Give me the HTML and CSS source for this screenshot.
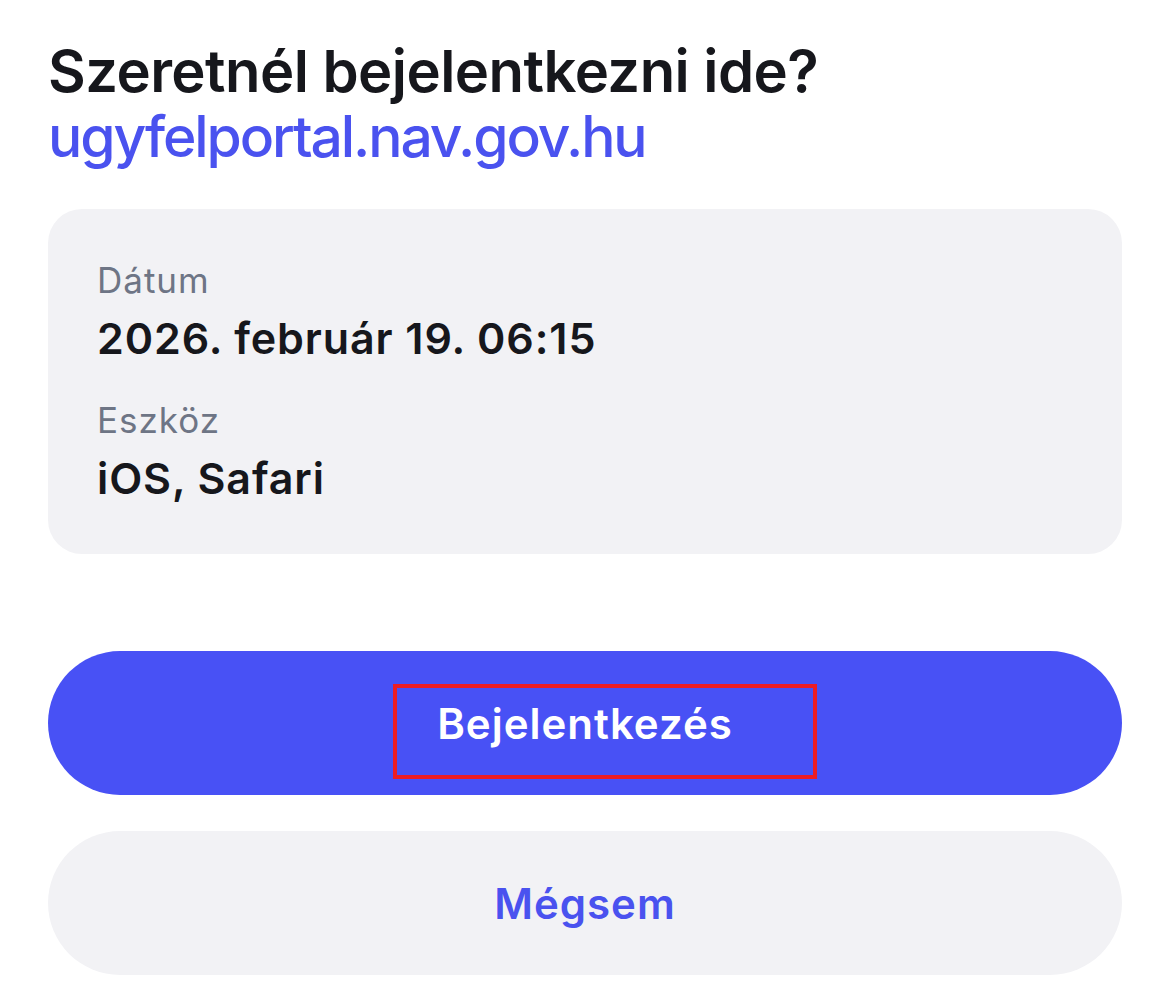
FILE: index.html
```html
<!DOCTYPE html>
<html lang="hu">
<head>
<meta charset="utf-8">
<title>Bejelentkezés</title>
<link rel="stylesheet" href="styles.css">
</head>
<body>
<main class="sheet">
  <header class="head">
    <h1 class="title">Szeretnél bejelentkezni ide?</h1>
    <div class="site">ugyfelportal.nav.gov.hu</div>
  </header>
  <section class="card">
    <div class="field">
      <div class="label">Dátum</div>
      <div class="value">2026. február 19. 06:15</div>
    </div>
    <div class="field">
      <div class="label">Eszköz</div>
      <div class="value">iOS, Safari</div>
    </div>
  </section>
  <div class="actions">
    <button class="btn btn-primary" type="button">
      <span>Bejelentkezés</span>
      <span class="highlight"></span>
    </button>
    <button class="btn btn-secondary" type="button">Mégsem</button>
  </div>
</main>
</body>
</html>
```
FILE: styles.css
```css
* { box-sizing: border-box; }
html, body { margin: 0; padding: 0; background: #ffffff; }
body {
  font-family: Inter, "Noto Sans", "Liberation Sans", sans-serif;
  -webkit-font-smoothing: antialiased;
}
.sheet {
  padding: 39px 48px 0 48px;
  display: flex;
  flex-direction: column;
}
.head { display: flex; flex-direction: column; }
.title {
  margin: 0;
  font-size: 58px;
  line-height: 65px;
  font-weight: 600;
  color: #16171c;
  letter-spacing: -0.55px;
}
.site {
  font-size: 57px;
  line-height: 65px;
  font-weight: 500;
  color: #4a52ef;
  letter-spacing: -2.1px;
}
.card {
  margin-top: 40px;
  background: #f2f2f5;
  border-radius: 34px;
  height: 345px;
  padding: 49px 49px 0 49px;
  display: flex;
  flex-direction: column;
  gap: 30px;
}
.field { display: flex; flex-direction: column; gap: 6px; }
.label {
  font-size: 35px;
  line-height: 44px;
  color: #6e7585;
  font-weight: 400;
  letter-spacing: 1px;
}
.value {
  font-size: 43px;
  line-height: 60px;
  color: #16171c;
  font-weight: 600;
  letter-spacing: 0.9px;
}
.actions {
  margin-top: 97px;
  display: flex;
  flex-direction: column;
  gap: 36px;
}
.btn {
  position: relative;
  width: 100%;
  height: 144px;
  border: 0;
  border-radius: 72px;
  font-family: inherit;
  font-size: 42px;
  font-weight: 600;
  letter-spacing: 1px;
  display: flex;
  align-items: center;
  justify-content: center;
  padding: 0;
}
.btn-primary { background: #4851f5; color: #ffffff; }
.btn-secondary { background: #f2f2f5; color: #4a52ef; }
.highlight {
  position: absolute;
  left: 345px;
  top: 33px;
  width: 424px;
  height: 95px;
  border: 4px solid #ec1c24;
}
```
